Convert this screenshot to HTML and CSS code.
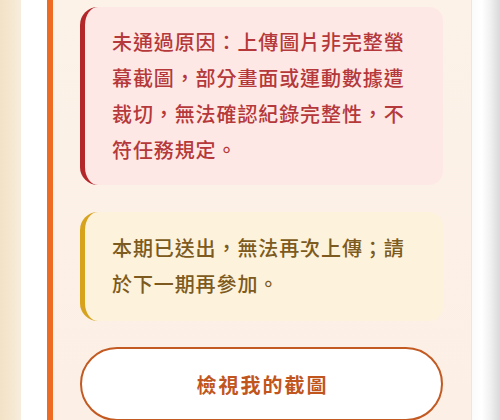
FILE: index.html
```html
<!DOCTYPE html>
<html lang="zh-Hant">
<head>
<meta charset="utf-8">
<title>Upload status</title>
<link rel="stylesheet" href="styles.css">
</head>
<body>
<div class="page">
  <div class="strip-left"></div>
  <div class="gutter"></div>
  <div class="accent-line"></div>
  <main class="panel">
    <div class="notice notice-error">未通過原因：上傳圖片非完整螢幕截圖，部分畫面或運動數據遭裁切，無法確認紀錄完整性，不符任務規定。</div>
    <div class="notice notice-warn">本期已送出，無法再次上傳；請於下一期再參加。</div>
    <button class="btn-outline" type="button">檢視我的截圖</button>
  </main>
  <div class="strip-right"></div>
</div>
</body>
</html>
```

FILE: styles.css
```css
html, body {
  margin: 0;
  padding: 0;
  height: 100%;
  overflow: hidden;
}

body {
  font-family: "Noto Sans CJK TC", "Noto Sans", sans-serif;
  background: #ffffff;
}

.page {
  display: flex;
  height: 420px;
  width: 500px;
}

.strip-left {
  width: 21px;
  flex: none;
  background: linear-gradient(90deg, #f2e2c6 0%, #f6e9d4 70%, #f8eedf 100%);
}

.gutter {
  width: 26px;
  flex: none;
  background: #ffffff;
}

.accent-line {
  width: 6px;
  flex: none;
  background: #ee6b24;
}

.panel {
  width: 418px;
  flex: none;
  box-sizing: border-box;
  padding: 7px 28px 0 27px;
  background: linear-gradient(180deg, #fcf2e8 0%, #fcefe6 100%);
  display: flex;
  flex-direction: column;
  gap: 27px;
}

.notice {
  border-left: 5px solid;
  border-radius: 18px 14px 14px 18px;
  padding: 17px 28px 17px 27px;
  font-size: 20px;
  line-height: 36px;
  letter-spacing: 0.9px;
  font-weight: 500;
}

.notice-error {
  background: #fde8e6;
  border-left-color: #b3262a;
  color: #b5383a;
}

.notice-warn {
  background: #fdf2dc;
  border-left-color: #d7a21c;
  color: #7c5a20;
  padding-top: 18px;
  padding-bottom: 19px;
}

.btn-outline {
  margin-top: -1px;
  height: 74px;
  border: 2px solid #c25a22;
  border-radius: 37px;
  background: #ffffff;
  color: #c0561d;
  font-family: "Noto Sans CJK TC", "Noto Sans", sans-serif;
  font-size: 20px;
  font-weight: 700;
  letter-spacing: 2px;
  padding: 0 0 0 2px;
  flex: none;
}

.strip-right {
  flex: 1;
  border-left: 1px solid #efe5d8;
  background: linear-gradient(90deg, #fbfbfb 0%, #ffffff 35%, #f1f1f1 65%, #d9d9d9 100%);
}
```
